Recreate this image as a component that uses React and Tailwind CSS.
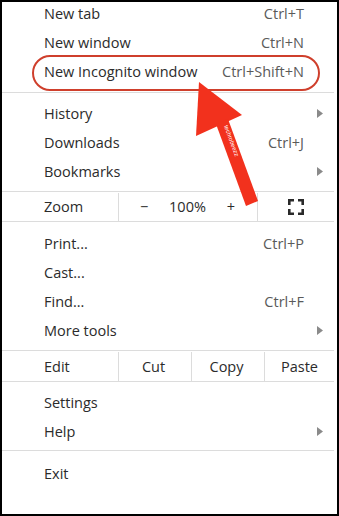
import { Fragment } from 'react';

const groups = [
  [
    { label: 'New tab', key: 'Ctrl+T' },
    { label: 'New window', key: 'Ctrl+N' },
    { label: 'New Incognito window', key: 'Ctrl+Shift+N' },
  ],
  [
    { label: 'History', sub: true },
    { label: 'Downloads', key: 'Ctrl+J' },
    { label: 'Bookmarks', sub: true },
  ],
];

const tools = [
  { label: 'Print...', key: 'Ctrl+P' },
  { label: 'Cast...' },
  { label: 'Find...', key: 'Ctrl+F' },
  { label: 'More tools', sub: true },
];

function Row({ item }) {
  return (
    <div className="h-[29px] flex items-center pl-[42px] pr-[33px]">
      <span className="flex-1">{item.label}</span>
      {item.key && <span className="text-[#5a5a5a]">{item.key}</span>}
      {item.sub && (
        <svg className="w-[6px] h-[9px] -mr-[19px]" viewBox="0 0 6 9">
          <path d="M0 0 L6 4.5 L0 9 Z" fill="#8a8a8a" />
        </svg>
      )}
    </div>
  );
}

function Sep() {
  return <div className="h-px bg-[#dcdcdc] mr-[3px]" />;
}

function FullscreenIcon() {
  return (
    <svg className="w-[16px] h-[16px]" viewBox="0 0 16 16" fill="none" stroke="#2a2a2a" strokeWidth="2.6">
      <path d="M1.3 6 V1.3 H6" />
      <path d="M10 1.3 H14.7 V6" />
      <path d="M14.7 10 V14.7 H10" />
      <path d="M6 14.7 H1.3 V10" />
    </svg>
  );
}

export default function App() {
  return (
    <div
      className="relative w-[339px] h-[516px] border-2 border-black bg-white text-[14.5px] text-[#2b2b2b] overflow-hidden"
      style={{ fontFamily: '"Open Sans", "Noto Sans", sans-serif' }}
    >
      <div className="-mt-[3px] pb-[6px]">
        {groups[0].map((it) => <Row key={it.label} item={it} />)}
      </div>
      <Sep />
      <div className="pt-[6px] pb-[5px]">
        {groups[1].map((it) => <Row key={it.label} item={it} />)}
      </div>
      <Sep />

      {/* Zoom row */}
      <div className="h-[29px] flex pt-px">
        <div className="w-[116px] pl-[42px] flex items-center">Zoom</div>
        <div className="w-[140px] border-x border-[#dcdcdc] flex items-center justify-between pl-[21px] pr-[22px]">
          <span>−</span>
          <span>100%</span>
          <span>+</span>
        </div>
        <div className="flex-1 flex items-center justify-center pr-[3px]">
          <FullscreenIcon />
        </div>
      </div>
      <Sep />

      <div className="pt-[7px] pb-[5px]">
        {tools.map((it) => <Row key={it.label} item={it} />)}
      </div>
      <Sep />

      {/* Edit row */}
      <div className="h-[30px] flex pt-px">
        <div className="w-[116px] pl-[42px] flex items-center">Edit</div>
        {['Cut', 'Copy', 'Paste'].map((t, i) => (
          <Fragment key={t}>
            <div className="w-px bg-[#dcdcdc]" />
            <div className={`${i === 2 ? 'flex-1' : 'w-[72px]'} flex items-center justify-center pr-[3px]`}>{t}</div>
          </Fragment>
        ))}
      </div>
      <Sep />

      <div className="pt-[6px] pb-[4px]">
        <Row item={{ label: 'Settings' }} />
        <Row item={{ label: 'Help', sub: true }} />
      </div>
      <Sep />
      <div className="pt-[8px]">
        <Row item={{ label: 'Exit' }} />
      </div>

      {/* annotation: oval around incognito row */}
      <div className="absolute left-[30px] top-[53px] w-[288px] h-[36px] rounded-full border-2 border-[#cf3f2c]" />

      {/* annotation: red arrow */}
      <svg className="absolute left-0 top-0 pointer-events-none" width="339" height="516" viewBox="0 0 339 516">
        <polygon points="197,80 194,134 240,113" fill="#f2311d" />
        <polygon points="214,122 226,117 256,199 244,204" fill="#f2311d" />
        <text
          x="0"
          y="0"
          fill="#ffffff"
          fontSize="6"
          fontFamily="Liberation Sans, sans-serif"
          transform="translate(222,124) rotate(70)"
        >
          techrobeezz
        </text>
      </svg>
    </div>
  );
}
